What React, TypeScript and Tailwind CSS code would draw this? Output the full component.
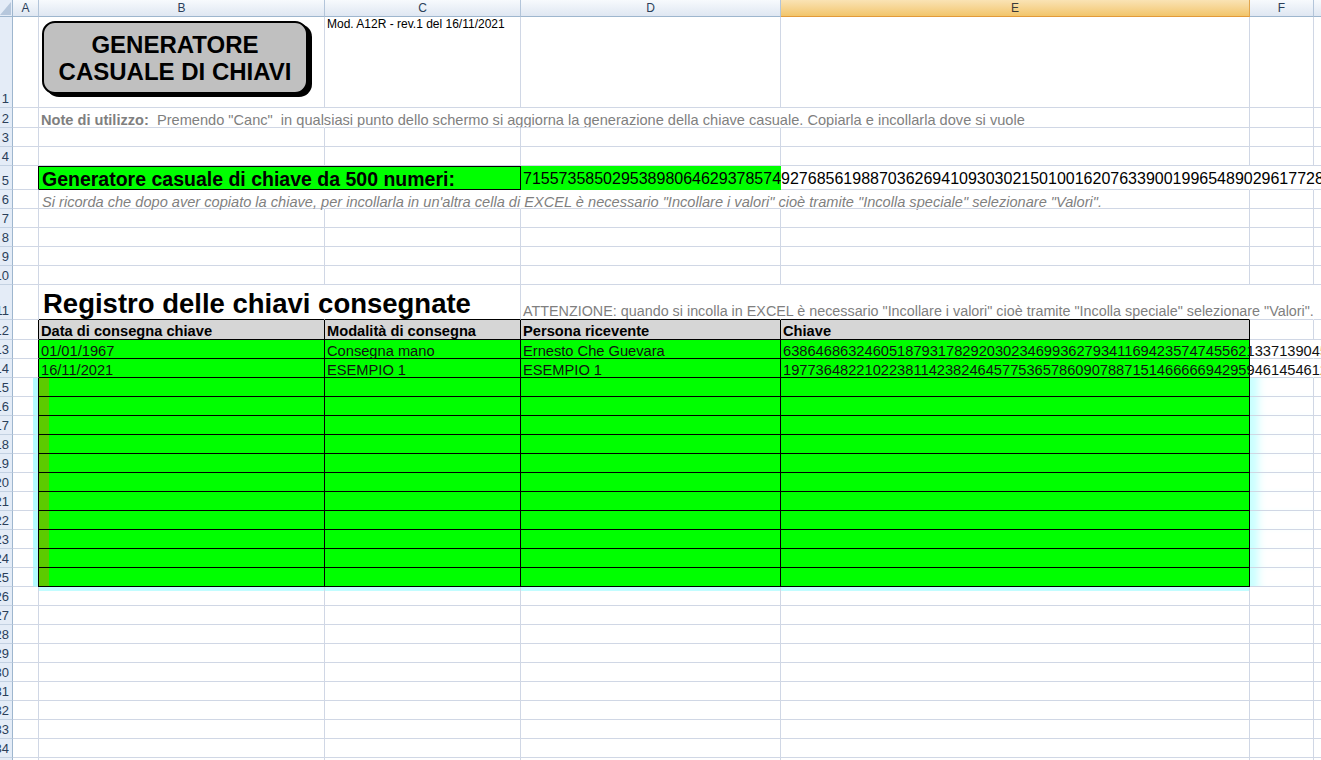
import React from 'react';

const GRID_R = 'border-r-[#d0d7e5]';
const GRID_B = 'border-b-[#d0d7e5]';

const W = {
  A: 'w-[26px]',
  B: 'w-[286px]',
  C: 'w-[196px]',
  D: 'w-[260px]',
  E: 'w-[469px]',
  F: 'w-[64px]',
  G: 'w-[120px]',
};

function Cell({
  w,
  r = GRID_R,
  b = GRID_B,
  cls = '',
  children,
}: {
  w: string;
  r?: string;
  b?: string;
  cls?: string;
  children?: React.ReactNode;
}) {
  return (
    <div className={`shrink-0 border-r border-b flex items-end whitespace-pre ${r} ${b} ${w} ${cls}`}>
      {children}
    </div>
  );
}

function RowHdr({ n }: { n: number }) {
  return (
    <div className="shrink-0 w-[13px] overflow-hidden bg-[#e4ecf7] border-r border-b border-r-[#9eb6ce] border-b-[#c3d1e2] flex items-end justify-end pb-[1px]">
      <span className="text-[13px] leading-[14px] text-[#2b3f5a] pr-[3px]">{n}</span>
    </div>
  );
}

function Row({ n, h, children }: { n: number; h: string; children: React.ReactNode }) {
  return (
    <div className={`flex ${h}`}>
      <RowHdr n={n} />
      {children}
    </div>
  );
}

function EmptyRow({ n }: { n: number }) {
  return (
    <Row n={n} h="h-[19px]">
      <Cell w={W.A} />
      <Cell w={W.B} />
      <Cell w={W.C} />
      <Cell w={W.D} />
      <Cell w={W.E} />
      <Cell w={W.F} />
      <Cell w={W.G} />
    </Row>
  );
}

function ColHdr({ w, label, active = false }: { w: string; label: string; active?: boolean }) {
  return (
    <div
      className={`shrink-0 h-full border-r border-b flex items-center justify-center text-[12px] leading-none ${w} ${
        active
          ? 'bg-linear-to-b from-[#fae3b4] to-[#f2c56a] border-r-[#e2a54c] border-b-[#e29a3a] text-[#3a3a3a]'
          : 'bg-linear-to-b from-[#f7fafd] to-[#dfe7f2] border-r-[#b3c5da] border-b-[#9eb6ce] text-[#2b3f5a]'
      }`}
    >
      {label}
    </div>
  );
}

const KEY5 =
  '71557358502953898064629378574927685619887036269410930302150100162076339001996548902961772854319';
const KEY13 =
  '63864686324605187931782920302346993627934116942357474556213371390455827361';
const KEY14 =
  '19773648221022381142382464577536578609078871514666669429594614546120938475';

const GREEN = 'bg-[#00ff00]';

function TableRow({ n, cells, glow }: { n: number; cells?: [string, string, string, string]; glow?: boolean }) {
  const t = 'pl-[2px] text-[14.67px] leading-[13px] text-[#111]';
  if (glow) {
    return (
      <Row n={n} h="h-[19px]">
        <Cell w="w-[25px]" r="border-r-[5px] border-r-[#b4fbff]" />
        <Cell w="w-[287px]" r="border-r-black" b="border-b-black" cls={`border-l border-l-black ${GREEN} shadow-[inset_10px_0_0_#5ccb00]`} />
        <Cell w={W.C} r="border-r-black" b="border-b-black" cls={GREEN} />
        <Cell w={W.D} r="border-r-black" b="border-b-black" cls={GREEN} />
        <Cell w={W.E} r="border-r-black" b="border-b-black" cls={GREEN} />
        <Cell w={W.F} cls="shadow-[inset_14px_0_8px_-6px_#c8ffff]" />
        <Cell w={W.G} />
      </Row>
    );
  }
  const c = cells ?? ['', '', '', ''];
  return (
    <Row n={n} h="h-[19px]">
      <Cell w={W.A} r="border-r-black" />
      <Cell w={W.B} r="border-r-black" b="border-b-black" cls={GREEN}>
        <span className={t}>{c[0]}</span>
      </Cell>
      <Cell w={W.C} r="border-r-black" b="border-b-black" cls={GREEN}>
        <span className={t}>{c[1]}</span>
      </Cell>
      <Cell w={W.D} r="border-r-black" b="border-b-black" cls={GREEN}>
        <span className={t}>{c[2]}</span>
      </Cell>
      <Cell w={W.E} r="border-r-black" b="border-b-black" cls={GREEN}>
        <span className={t}>{c[3]}</span>
      </Cell>
      <Cell w={W.F} r="border-r-transparent" />
      <Cell w={W.G} />
    </Row>
  );
}

export default function App() {
  const gray = 'text-[#7f7f7f]';
  return (
    <div className="w-[1321px] h-[760px] overflow-hidden bg-white font-['Liberation_Sans',Arial,sans-serif] text-black">
      {/* column headers */}
      <div className="flex h-[17px]">
        <div className="shrink-0 w-[13px] h-full bg-[#e4ecf7] border-r border-b border-r-[#9eb6ce] border-b-[#9eb6ce] flex items-end justify-end">
          <svg width="12" height="16" viewBox="0 0 12 16">
            <polygon points="11,2 11,15 0,15" fill="#b6c7dc" />
          </svg>
        </div>
        <ColHdr w={W.A} label="A" />
        <ColHdr w={W.B} label="B" />
        <ColHdr w={W.C} label="C" />
        <ColHdr w={W.D} label="D" />
        <ColHdr w={W.E} label="E" active />
        <ColHdr w={W.F} label="F" />
        <ColHdr w={W.G} label="G" />
      </div>

      {/* row 1 */}
      <Row n={1} h="h-[91px]">
        <Cell w={W.A} />
        <Cell w={W.B} cls="!items-start">
          <div className="ml-[3px] mt-[4px] w-[266px] h-[73px] rounded-[13px] bg-[#c0c0c0] border-2 border-black shadow-[4px_3px_0_#000] flex flex-col items-center justify-center font-bold text-[24px] leading-[27px] text-black">
            <span>GENERATORE</span>
            <span>CASUALE DI CHIAVI</span>
          </div>
        </Cell>
        <Cell w={W.C} cls="!items-start">
          <span className="pl-[2px] text-[12px] leading-[14px]">Mod. A12R - rev.1 del 16/11/2021</span>
        </Cell>
        <Cell w={W.D} />
        <Cell w={W.E} />
        <Cell w={W.F} />
        <Cell w={W.G} />
      </Row>

      {/* row 2 */}
      <Row n={2} h="h-[20px]">
        <Cell w={W.A} />
        <Cell w={W.B} r="border-r-transparent">
          <span className={`pl-[2px] text-[14.6px] leading-[14px] ${gray}`}>
            <b>Note di utilizzo:</b>
            {'  Premendo "Canc"  in qualsiasi punto dello schermo si aggiorna la generazione della chiave casuale. Copiarla e incollarla dove si vuole'}
          </span>
        </Cell>
        <Cell w={W.C} r="border-r-transparent" />
        <Cell w={W.D} r="border-r-transparent" />
        <Cell w={W.E} />
        <Cell w={W.F} />
        <Cell w={W.G} />
      </Row>

      <EmptyRow n={3} />
      <EmptyRow n={4} />

      {/* row 5 */}
      <Row n={5} h="h-[24px]">
        <Cell w={W.A} r="border-r-black" />
        <div className={`shrink-0 w-[482px] border-t border-r border-b border-black ${GREEN} flex items-end whitespace-pre`}>
          <span className="pl-[3px] font-bold text-[19.5px] leading-[20px]">Generatore casuale di chiave da 500 numeri:</span>
        </div>
        <Cell w={W.D} r="border-r-[#00ff00]" b="border-b-[#00ff00]" cls={GREEN}>
          <span className="pl-[2px] pb-[1px] text-[16px] leading-[18px]">{KEY5}</span>
        </Cell>
        <Cell w={W.E} r="border-r-transparent" />
        <Cell w={W.F} r="border-r-transparent" />
        <Cell w={W.G} />
      </Row>

      {/* row 6 */}
      <Row n={6} h="h-[19px]">
        <Cell w={W.A} />
        <Cell w={W.B} r="border-r-transparent">
          <span className={`pl-[3px] italic text-[14.6px] leading-[12px] ${gray}`}>
            {'Si ricorda che dopo aver copiato la chiave, per incollarla in un\'altra cella di EXCEL è necessario "Incollare i valori" cioè tramite "Incolla speciale" selezionare "Valori".'}
          </span>
        </Cell>
        <Cell w={W.C} r="border-r-transparent" />
        <Cell w={W.D} r="border-r-transparent" />
        <Cell w={W.E} />
        <Cell w={W.F} />
        <Cell w={W.G} />
      </Row>

      <EmptyRow n={7} />
      <EmptyRow n={8} />
      <EmptyRow n={9} />
      <EmptyRow n={10} />

      {/* row 11 */}
      <Row n={11} h="h-[35px]">
        <Cell w={W.A} />
        <Cell w={W.B} r="border-r-transparent" b="border-b-black">
          <span className="pl-[4px] font-bold text-[27.5px] leading-[30px]">Registro delle chiavi consegnate</span>
        </Cell>
        <Cell w={W.C} b="border-b-black" />
        <Cell w={W.D} r="border-r-transparent" b="border-b-black">
          <span className={`pl-[2px] text-[14.35px] leading-[16px] ${gray}`}>
            {'ATTENZIONE: quando si incolla in EXCEL è necessario "Incollare i valori" cioè tramite "Incolla speciale" selezionare "Valori".'}
          </span>
        </Cell>
        <Cell w={W.E} r="border-r-transparent" b="border-b-black" />
        <Cell w={W.F} r="border-r-transparent" />
        <Cell w={W.G} />
      </Row>

      {/* row 12 header */}
      <Row n={12} h="h-[20px]">
        <Cell w={W.A} r="border-r-black" />
        {[
          [W.B, 'Data di consegna chiave'],
          [W.C, 'Modalità di consegna'],
          [W.D, 'Persona ricevente'],
          [W.E, 'Chiave'],
        ].map(([w, label]) => (
          <Cell key={label} w={w} r="border-r-black" b="border-b-black" cls="bg-[#d6d6d6]">
            <span className="pl-[2px] font-bold text-[14.67px] leading-[15px]">{label}</span>
          </Cell>
        ))}
        <Cell w={W.F} />
        <Cell w={W.G} />
      </Row>

      <TableRow n={13} cells={['01/01/1967', 'Consegna mano', 'Ernesto Che Guevara', KEY13]} />
      <TableRow n={14} cells={['16/11/2021', 'ESEMPIO 1', 'ESEMPIO 1', KEY14]} />
      {[15, 16, 17, 18, 19, 20, 21, 22, 23, 24, 25].map((n) => (
        <TableRow key={n} n={n} glow />
      ))}

      {/* row 26 */}
      <Row n={26} h="h-[19px]">
        <Cell w={W.A} />
        <Cell w={W.B} cls="shadow-[inset_0_4px_0_#c2fdff]" />
        <Cell w={W.C} cls="shadow-[inset_0_4px_0_#c2fdff]" />
        <Cell w={W.D} cls="shadow-[inset_0_4px_0_#c2fdff]" />
        <Cell w={W.E} cls="shadow-[inset_0_4px_0_#c2fdff]" />
        <Cell w={W.F} />
        <Cell w={W.G} />
      </Row>

      {[27, 28, 29, 30, 31, 32, 33, 34, 35].map((n) => (
        <EmptyRow key={n} n={n} />
      ))}
    </div>
  );
}
